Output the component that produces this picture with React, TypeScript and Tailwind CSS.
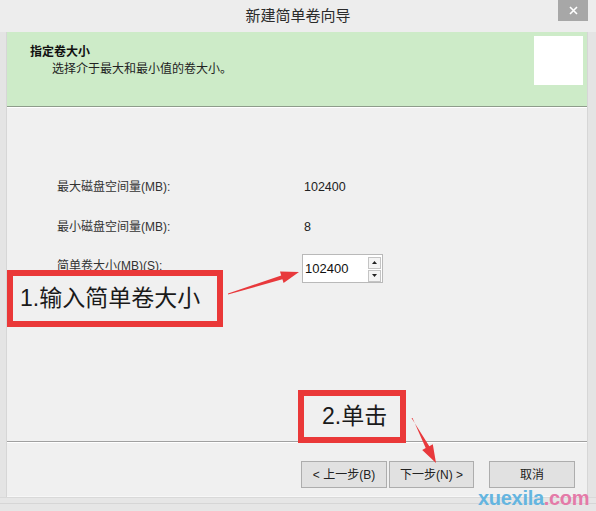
import React from "react";

const font = { fontFamily: '"Liberation Sans", "Noto Sans CJK SC", sans-serif' };

function Btn({ children, w }: { children: React.ReactNode; w: string }) {
  return (
    <div
      className={`${w} h-[27px] flex items-center justify-center bg-[#e1e1e1] border border-[#adadad] text-[12px] text-[#222]`}
    >
      {children}
    </div>
  );
}

export default function App() {
  return (
    <div
      className="w-[596px] h-[511px] relative overflow-hidden bg-[#e9e9e9] flex flex-col"
      style={font}
    >
      {/* Title bar */}
      <div className="h-[32px] shrink-0 flex items-center justify-center text-[15px] text-[#2b2b2b] bg-[#ededed] relative">
        新建简单卷向导
        <div className="absolute top-0 right-[8px] w-[30px] h-[21px] bg-[#a7a7a7] flex items-center justify-center">
          <svg width="9" height="9" viewBox="0 0 9 9">
            <path d="M1 1 L8 8 M8 1 L1 8" stroke="#fff" strokeWidth="1.6" />
          </svg>
        </div>
      </div>

      {/* Middle */}
      <div className="flex shrink-0 h-[465px]">
        <div className="w-[7px] bg-[#e4e4e4] border-r border-[#d6d6d6]" />
        <div className="flex-1 flex flex-col bg-[#f0f0f0]">
          {/* Green header */}
          <div className="h-[74px] bg-[#cdebc8] flex justify-between">
            <div className="pl-[23px] pt-[12px]">
              <div className="text-[12px] font-bold text-[#111] leading-[16px]">指定卷大小</div>
              <div className="text-[12px] text-[#222] leading-[16px] pl-[22px] mt-[1px]">
                选择介于最大和最小值的卷大小。
              </div>
            </div>
            <div className="w-[49px] h-[49px] bg-white mt-[4px] mr-[4px]" />
          </div>
          <div className="h-[1px] bg-[#8e9c8b]" />
          <div className="h-[1px] bg-white" />

          {/* Content */}
          <div className="h-[333px] flex flex-col pl-[50px] pt-[71px] text-[12px] text-[#333]">
            <div className="flex h-[16px] items-center">
              <div className="w-[247px]">最大磁盘空间量(MB):</div>
              <div className="text-[12.5px] text-[#222]">102400</div>
            </div>
            <div className="flex h-[16px] items-center mt-[24px]">
              <div className="w-[247px]">最小磁盘空间量(MB):</div>
              <div className="text-[12.5px] text-[#222]">8</div>
            </div>
            <div className="flex items-start mt-[19px]">
              <div className="w-[245px] pt-[4px] leading-[16px]">简单卷大小(MB)(S):</div>
              <div className="w-[81px] h-[29px] bg-white border border-[#b9b9b9] flex items-center justify-between pl-[2px] pr-[1px]">
                <span className="text-[13px] text-[#111]">102400</span>
                <div className="flex flex-col gap-[1px] mt-[1px]">
                  <div className="w-[13px] h-[12px] border border-[#c4c4c4] bg-[#f4f4f4] flex items-center justify-center">
                    <svg width="5" height="3" viewBox="0 0 5 3"><path d="M0 3 L2.5 0 L5 3 Z" fill="#222" /></svg>
                  </div>
                  <div className="w-[13px] h-[12px] border border-[#c4c4c4] bg-[#f4f4f4] flex items-center justify-center">
                    <svg width="5" height="3" viewBox="0 0 5 3"><path d="M0 0 L5 0 L2.5 3 Z" fill="#222" /></svg>
                  </div>
                </div>
              </div>
            </div>
          </div>

          <div className="h-[1px] bg-[#a0a0a0]" />
          <div className="h-[1px] bg-white" />

          {/* Footer */}
          <div className="flex-1 flex items-start justify-end pt-[18px] pr-[12px]">
            <Btn w="w-[86px]">&lt; 上一步(B)</Btn>
            <div className="w-[2px]" />
            <Btn w="w-[85px]">下一步(N) &gt;</Btn>
            <div className="w-[15px]" />
            <Btn w="w-[86px]">取消</Btn>
          </div>
          <div className="h-[1px] bg-[#f7f7f7]" />
        </div>
        <div className="w-[9px] bg-[#e4e4e4] border-l border-[#d6d6d6]" />
      </div>

      {/* Bottom frame */}
      <div className="flex-1 bg-[#e6e6e6] border-t border-[#d9d9d9] flex flex-col">
        <div className="h-[5px]" />
        <div className="h-[1px] bg-[#d6d6d6]" />
      </div>

      {/* Annotation boxes */}
      <div className="absolute left-[7px] top-[270px] w-[216px] h-[57px] border-[6px] border-[#ea3838] bg-[#f0f0f0] flex items-center pl-[7px] text-[23px] text-[#1a1a1a]">
        1.输入简单卷大小
      </div>
      <div className="absolute left-[298px] top-[390px] w-[108px] h-[53px] border-[6px] border-[#ea3838] bg-[#f0f0f0] flex items-center pl-[18px] text-[23px] text-[#1a1a1a]">
        2.单击
      </div>

      {/* Arrows */}
      <svg className="absolute left-0 top-0 pointer-events-none" width="596" height="511" viewBox="0 0 596 511">
        <polygon
          points="228,294.5 282.4,279.2 283.6,283.0 299,272 280.0,271.6 281.2,275.4 228,293.5"
          fill="#e8393c"
        />
        <polygon
          points="411.5,418 429.3,446.2 432.8,444.3 436,463 422.2,449.9 425.7,448.0 412.5,418"
          fill="#e8393c"
        />
      </svg>

      {/* Watermark */}
      <div className="absolute left-[478px] top-[487px] text-[20px] leading-[22px] font-bold tracking-[-0.3px]">
        <span className="text-[#64b5e0]">xuexila</span>
        <span className="text-[#e47aa8]">.com</span>
      </div>
    </div>
  );
}
